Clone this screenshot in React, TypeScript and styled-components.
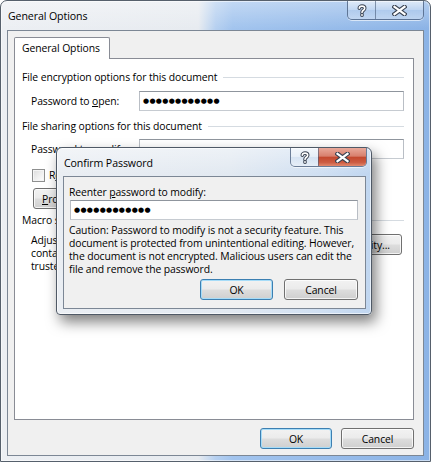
import React from "react";
import styled, { createGlobalStyle } from "styled-components";

const Global = createGlobalStyle`
  html, body { margin: 0; padding: 0; width: 431px; height: 462px; overflow: hidden; background: #ffffff; }
  body {
    font-family: "Open Sans", "Noto Sans", sans-serif;
    font-size: 10.4px;
    letter-spacing: -0.1px;
    color: #000;
  }
  * { box-sizing: border-box; }
`;

const Window = styled.div`
  position: relative;
  width: 431px;
  height: 462px;
  border: 1px solid #56606c;
  border-radius: 7px 7px 0 0;
  background:
    linear-gradient(to bottom, rgba(255, 255, 255, 0.35), rgba(255, 255, 255, 0) 28px),
    linear-gradient(to right, #eceff3 0, #e7ebf0 46%, #b6d0f0 50%, #a2c4ee 54%, #8bb3e6 100%);
  box-shadow: inset 0 0 0 1px rgba(255, 255, 255, 0.55);
  display: flex;
  flex-direction: column;
`;

const TitleBar = styled.div<{ $h: number; $pr: number }>`
  height: ${(p) => p.$h}px;
  flex: none;
  display: flex;
  align-items: flex-start;
  padding-right: ${(p) => p.$pr}px;
`;

const TitleText = styled.div`
  flex: 1;
  padding-left: 7px;
  line-height: 14px;
  margin-top: 8px;
  font-size: 10.6px;
  color: #000;
  white-space: nowrap;
`;

const CaptionGroup = styled.div`
  display: flex;
  height: 19px;
  border: 1px solid rgba(70, 90, 120, 0.75);
  border-top: none;
  border-radius: 0 0 5px 5px;
  overflow: hidden;
  box-shadow: 0 1px 0 rgba(255, 255, 255, 0.6);
`;

const CaptionButton = styled.div<{ $w: number; $close?: boolean }>`
  width: ${(p) => p.$w}px;
  height: 100%;
  display: flex;
  align-items: center;
  justify-content: center;
  background: ${(p) =>
    p.$close
      ? "linear-gradient(to bottom, #e9a99a 0%, #d8806e 45%, #c4492f 52%, #cc5c43 80%, #e28a6f 100%)"
      : "linear-gradient(to bottom, rgba(255,255,255,0.55) 0%, rgba(255,255,255,0.25) 48%, rgba(190,210,235,0.25) 52%, rgba(255,255,255,0.35) 100%)"};
  & + & {
    border-left: 1px solid rgba(70, 90, 120, 0.6);
  }
`;

const HelpGlyph = () => (
  <svg width="10" height="13" viewBox="0 0 10 13">
    <path d="M2.3 4.2 C2.3 1.4 7.7 1.4 7.7 4.2 C7.7 6.3 5 6.2 5 8.4" fill="none" stroke="#3a4352" strokeWidth="3.6" strokeLinecap="round" />
    <circle cx="5" cy="11" r="1.9" fill="#3a4352" />
    <path d="M2.3 4.2 C2.3 1.4 7.7 1.4 7.7 4.2 C7.7 6.3 5 6.2 5 8.4" fill="none" stroke="#ffffff" strokeWidth="1.6" strokeLinecap="round" />
    <circle cx="5" cy="11" r="0.9" fill="#ffffff" />
  </svg>
);

const CloseGlyph = () => (
  <svg width="15" height="11" viewBox="0 0 15 11">
    <path d="M2.5 1.8 L12.5 9.2 M12.5 1.8 L2.5 9.2" fill="none" stroke="#3a4352" strokeWidth="4.4" strokeLinecap="square" />
    <path d="M2.5 1.8 L12.5 9.2 M12.5 1.8 L2.5 9.2" fill="none" stroke="#ffffff" strokeWidth="2.2" strokeLinecap="square" />
  </svg>
);

const Client = styled.div<{ $m: string; $pad: string }>`
  flex: 1;
  margin: ${(p) => p.$m};
  border: 1px solid #7c8795;
  background: #f0f0f0;
  display: flex;
  flex-direction: column;
  padding: ${(p) => p.$pad};
`;

const TabStrip = styled.div`
  display: flex;
  height: 22px;
  position: relative;
  z-index: 1;
`;

const Tab = styled.div`
  width: 96px;
  height: 22px;
  border: 1px solid #898c95;
  border-bottom: none;
  background: #ffffff;
  padding-left: 7px;
  line-height: 21px;
  white-space: nowrap;
  border-radius: 2px 2px 0 0;
`;

const Panel = styled.div`
  margin-top: -1px;
  height: 362px;
  border: 1px solid #898c95;
  background: #ffffff;
  padding: 11px 9px 0 7px;
  display: flex;
  flex-direction: column;
`;

const Heading = styled.div<{ $mt: number }>`
  margin-top: ${(p) => p.$mt}px;
  height: 14px;
  line-height: 14px;
  display: flex;
  align-items: center;
  gap: 6px;
  white-space: nowrap;
  &::after {
    content: "";
    flex: 1;
    height: 1px;
    background: #d5dbe1;
  }
`;

const FieldRow = styled.div<{ $mt: number }>`
  margin-top: ${(p) => p.$mt}px;
  display: flex;
  align-items: center;
  padding-left: 9px;
`;

const Label = styled.div`
  width: 108px;
  line-height: 14px;
  white-space: nowrap;
`;

const Acc = styled.span`
  text-decoration: underline;
`;

const TextBox = styled.div<{ $w?: number }>`
  ${(p) => (p.$w ? `width: ${p.$w}px;` : "flex: 1;")}
  height: 20px;
  border: 1px solid #abadb3;
  border-color: #8f959d #b9bec5 #c6cbd1 #b9bec5;
  background: #ffffff;
  display: flex;
  align-items: center;
  padding-left: 3px;
`;

const Dots = styled.span`
  font-family: "DejaVu Sans", sans-serif;
  font-size: 7px;
  letter-spacing: 0.3px;
  color: #000;
  line-height: 10px;
`;

const CheckRow = styled.div<{ $mt: number }>`
  margin-top: ${(p) => p.$mt}px;
  display: flex;
  align-items: center;
  gap: 4px;
  padding-left: 10px;
  line-height: 14px;
  white-space: nowrap;
`;

const CheckBox = styled.div`
  width: 13px;
  height: 13px;
  border: 1px solid #8e8f8f;
  background: linear-gradient(135deg, #dcdcdc, #ffffff);
  box-shadow: inset 0 0 0 1px #f4f4f4;
`;

const Button = styled.div<{ $w?: number; $default?: boolean }>`
  ${(p) => (p.$w ? `width: ${p.$w}px;` : "padding: 0 8px;")}
  height: 21px;
  flex: none;
  border: 1px solid ${(p) => (p.$default ? "#3c7fb1" : "#707070")};
  border-radius: 3px;
  background: linear-gradient(to bottom, #f2f2f2 0%, #ebebeb 48%, #dddddd 52%, #cfcfcf 100%);
  box-shadow: inset 0 0 0 1px ${(p) => (p.$default ? "#a6dcf8" : "rgba(255,255,255,0.75)")};
  display: flex;
  align-items: center;
  justify-content: center;
  line-height: 14px;
  white-space: nowrap;
`;

const Slot = styled.div<{ $mt: number; $ml: number }>`
  margin-top: ${(p) => p.$mt}px;
  margin-left: ${(p) => p.$ml}px;
  display: flex;
`;

const MacroRow = styled.div`
  margin-top: 7px;
  display: flex;
  align-items: flex-start;
  justify-content: space-between;
  gap: 10px;
  padding-left: 9px;
  padding-right: 2px;
`;

const Para = styled.div`
  flex: 1;
  line-height: 13px;
`;

const ButtonRow = styled.div<{ $mt: number; $gap: number }>`
  margin-top: ${(p) => p.$mt}px;
  display: flex;
  justify-content: flex-end;
  gap: ${(p) => p.$gap}px;
`;

const Dialog = styled.div`
  position: absolute;
  left: 55px;
  top: 146px;
  width: 316px;
  height: 168px;
  border: 1px solid #4f5966;
  border-radius: 6px 6px 4px 4px;
  background:
    linear-gradient(to bottom, rgba(255, 255, 255, 0.4), rgba(255, 255, 255, 0) 26px),
    linear-gradient(to right, #eaeef3 0%, #e2e9f1 55%, #cfdff2 85%, #c0d6f0 100%);
  box-shadow: inset 0 0 0 1px rgba(255, 255, 255, 0.6), 4px 7px 14px rgba(0, 0, 0, 0.5);
  display: flex;
  flex-direction: column;
  z-index: 5;
`;

const PromptLabel = styled.div`
  line-height: 14px;
`;

const Caution = styled.div`
  margin-top: 4px;
  line-height: 13px;
  white-space: nowrap;
`;

const PW = "●●●●●●●●●●●●";

export default function App() {
  return (
    <>
      <Global />
      <Window>
        <TitleBar $h={29} $pr={6}>
          <TitleText>General Options</TitleText>
          <CaptionGroup>
            <CaptionButton $w={27}>
              <HelpGlyph />
            </CaptionButton>
            <CaptionButton $w={48}>
              <CloseGlyph />
            </CaptionButton>
          </CaptionGroup>
        </TitleBar>
        <Client $m="0 6px 5px 6px" $pad="6px 9px 0 6px">
          <TabStrip>
            <Tab>General Options</Tab>
          </TabStrip>
          <Panel>
            <Heading $mt={0}>File encryption options for this document</Heading>
            <FieldRow $mt={7}>
              <Label>
                Password to <Acc>o</Acc>pen:
              </Label>
              <TextBox>
                <Dots>{PW}</Dots>
              </TextBox>
            </FieldRow>
            <Heading $mt={8}>File sharing options for this document</Heading>
            <FieldRow $mt={6}>
              <Label>
                Password to <Acc>m</Acc>odify:
              </Label>
              <TextBox />
            </FieldRow>
            <CheckRow $mt={9}>
              <CheckBox />
              <span>
                R<Acc>e</Acc>ad-only recommended
              </span>
            </CheckRow>
            <Slot $mt={6} $ml={11}>
              <Button>
                <Acc>P</Acc>rotect Document...
              </Button>
            </Slot>
            <Heading $mt={4}>Macro security</Heading>
            <MacroRow>
              <Para>
                Adjust the security level for opening files that might contain macro viruses and
                specify the names of trusted macro developers.
              </Para>
              <Button $w={100}>
                Macro <Acc>S</Acc>ecurity...
              </Button>
            </MacroRow>
          </Panel>
          <ButtonRow $mt={8} $gap={9}>
            <Button $w={72} $default>
              OK
            </Button>
            <Button $w={73}>Cancel</Button>
          </ButtonRow>
        </Client>

        <Dialog>
          <TitleBar $h={28} $pr={4}>
            <TitleText>Confirm Password</TitleText>
            <CaptionGroup>
              <CaptionButton $w={27}>
                <HelpGlyph />
              </CaptionButton>
              <CaptionButton $w={48} $close>
                <CloseGlyph />
              </CaptionButton>
            </CaptionGroup>
          </TitleBar>
          <Client $m="0 5px 5px 6px" $pad="8px 7px 0 5px">
            <PromptLabel>
              Reenter <Acc>p</Acc>assword to modify:
            </PromptLabel>
            <Slot $mt={1} $ml={1}>
              <TextBox $w={288}>
                <Dots>{PW}</Dots>
              </TextBox>
            </Slot>
            <Caution>
              Caution: Password to modify is not a security feature. This
              <br />
              document is protected from unintentional editing. However,
              <br />
              the document is not encrypted. Malicious users can edit the
              <br />
              file and remove the password.
            </Caution>
            <ButtonRow $mt={3} $gap={11}>
              <Button $w={73} $default>
                OK
              </Button>
              <Button $w={74}>Cancel</Button>
            </ButtonRow>
          </Client>
        </Dialog>
      </Window>
    </>
  );
}
